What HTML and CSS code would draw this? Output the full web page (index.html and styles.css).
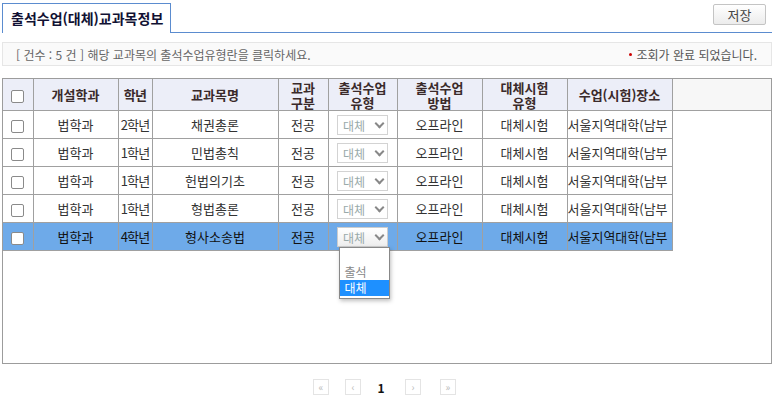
FILE: index.html
```html
<!DOCTYPE html>
<html lang="ko">
<head>
    <meta charset="UTF-8">
    <title>출석수업(대체)교과목정보</title>
    <link rel="stylesheet" href="styles.css">
</head>
<body>
    <div class="page">
        <div class="tab-bar">
            <div class="tab">출석수업(대체)교과목정보</div>
            <div class="tab-line">
                <button class="save-btn">저장</button>
            </div>
        </div>

        <div class="info-bar">
            <span>[ 건수 : 5 건 ] 해당 교과목의 출석수업유형란을 클릭하세요.</span>
            <span class="status"><i class="dot"></i>조회가 완료 되었습니다.</span>
        </div>

        <div class="grid">
            <table>
                <colgroup>
                    <col style="width:30px">
                    <col style="width:85px">
                    <col style="width:34px">
                    <col style="width:126px">
                    <col style="width:50px">
                    <col style="width:69px">
                    <col style="width:85px">
                    <col style="width:85px">
                    <col style="width:105px">
                    <col>
                </colgroup>
                <thead>
                    <tr>
                        <th><span class="chk"></span></th>
                        <th>개설학과</th>
                        <th class="tight">학년</th>
                        <th>교과목명</th>
                        <th><div>교과</div><div>구분</div></th>
                        <th><div>출석수업</div><div>유형</div></th>
                        <th><div>출석수업</div><div>방법</div></th>
                        <th><div>대체시험</div><div>유형</div></th>
                        <th>수업(시험)장소</th>
                        <th class="filler"></th>
                    </tr>
                </thead>
                <tbody>
                    <tr>
                        <td><span class="chk"></span></td>
                        <td>법학과</td>
                        <td class="tight">2학년</td>
                        <td>채권총론</td>
                        <td>전공</td>
                        <td><span class="sel">대체<i class="arrow"></i></span></td>
                        <td>오프라인</td>
                        <td>대체시험</td>
                        <td class="place">서울지역대학(남부</td>
                        <td class="filler"></td>
                    </tr>
                    <tr>
                        <td><span class="chk"></span></td>
                        <td>법학과</td>
                        <td class="tight">1학년</td>
                        <td>민법총칙</td>
                        <td>전공</td>
                        <td><span class="sel">대체<i class="arrow"></i></span></td>
                        <td>오프라인</td>
                        <td>대체시험</td>
                        <td class="place">서울지역대학(남부</td>
                        <td class="filler"></td>
                    </tr>
                    <tr>
                        <td><span class="chk"></span></td>
                        <td>법학과</td>
                        <td class="tight">1학년</td>
                        <td>헌법의기초</td>
                        <td>전공</td>
                        <td><span class="sel">대체<i class="arrow"></i></span></td>
                        <td>오프라인</td>
                        <td>대체시험</td>
                        <td class="place">서울지역대학(남부</td>
                        <td class="filler"></td>
                    </tr>
                    <tr>
                        <td><span class="chk"></span></td>
                        <td>법학과</td>
                        <td class="tight">1학년</td>
                        <td>형법총론</td>
                        <td>전공</td>
                        <td><span class="sel">대체<i class="arrow"></i></span></td>
                        <td>오프라인</td>
                        <td>대체시험</td>
                        <td class="place">서울지역대학(남부</td>
                        <td class="filler"></td>
                    </tr>
                    <tr class="selected">
                        <td><span class="chk"></span></td>
                        <td>법학과</td>
                        <td class="tight">4학년</td>
                        <td>형사소송법</td>
                        <td>전공</td>
                        <td class="open">
                            <span class="sel active">대체<i class="arrow"></i></span>
                            <div class="popup">
                                <div class="opt empty"></div>
                                <div class="opt">출석</div>
                                <div class="opt on">대체</div>
                            </div>
                        </td>
                        <td>오프라인</td>
                        <td>대체시험</td>
                        <td class="place">서울지역대학(남부</td>
                        <td class="filler"></td>
                    </tr>
                </tbody>
            </table>
        </div>

        <div class="paging">
            <span class="pg first">&laquo;</span>
            <span class="pg prev">&lsaquo;</span>
            <span class="cur">1</span>
            <span class="pg next">&rsaquo;</span>
            <span class="pg last">&raquo;</span>
        </div>
    </div>
</body>
</html>
```

FILE: styles.css
```css
body {
    margin: 0;
    font-family: "Noto Sans CJK KR", "Liberation Sans", sans-serif;
    font-size: 13px;
    color: #333;
    background: #fff;
}
.page {
    padding: 3px 3px 0 2px;
}
.tab-bar {
    display: flex;
    height: 30px;
}
.tab {
    padding: 0 7px 0 8px;
    line-height: 28px;
    border: 1px solid #5b8ccf;
    border-bottom: none;
    font-weight: bold;
    font-size: 14px;
    color: #111133;
}
.tab-line {
    flex: 1;
    border-bottom: 1px solid #5b8ccf;
    display: flex;
    justify-content: flex-end;
    align-items: flex-start;
    padding-top: 1px;
    padding-right: 6px;
}
.save-btn {
    width: 53px;
    height: 21px;
    font-family: inherit;
    font-size: 13px;
    color: #444;
    background: linear-gradient(#fff, #ececec);
    border: 1px solid #c4c4c4;
    border-radius: 2px;
    padding: 0;
}
.info-bar {
    margin-top: 9px;
    height: 22px;
    border: 1px solid #e6e6e6;
    background: #fafafa;
    display: flex;
    justify-content: space-between;
    align-items: center;
    padding: 0 14px 0 13px;
    color: #666;
    font-size: 12px;
}
.status {
    display: flex;
    align-items: center;
    color: #555;
}
.dot {
    width: 3px;
    height: 3px;
    background: #c00;
    border-radius: 50%;
    margin-right: 5px;
}
.grid {
    margin-top: 12px;
    height: 284px;
    border: 1px solid #9c9c9c;
    position: relative;
}
table {
    border-collapse: collapse;
    table-layout: fixed;
    width: 100%;
}
th, td {
    border: 1px solid #a0a0a0;
    text-align: center;
    padding: 0;
    white-space: nowrap;
    overflow: hidden;
}
th:first-child, td:first-child {
    border-left: none;
}
thead tr th {
    border-top: none;
}
th {
    height: 31px;
    background: #eceef8;
    font-weight: bold;
    color: #3a2a2a;
}
th div {
    height: 15px;
    line-height: 15px;
}
th.filler {
    background: #f7f7f7;
    border-right: none;
}
td {
    height: 27px;
    color: #333;
}
td.filler {
    border: none;
}
.tight {
    letter-spacing: -0.8px;
}
td.place {
    text-align: left;
}
.chk {
    display: inline-block;
    width: 11px;
    height: 11px;
    border: 1px solid #8a8a8a;
    border-radius: 2px;
    background: #fff;
    vertical-align: middle;
}
.sel {
    display: inline-flex;
    align-items: center;
    justify-content: space-between;
    width: 40px;
    height: 18px;
    padding: 0 4px 0 5px;
    border: 1px solid #d3d3d3;
    background: #fff;
    color: #9aa;
    font-size: 12px;
    vertical-align: middle;
}
.sel.active {
    background: linear-gradient(#fff, #eee);
    border-color: #ccc;
}
.arrow {
    width: 5px;
    height: 5px;
    border-right: 2px solid #888;
    border-bottom: 2px solid #888;
    transform: rotate(45deg);
    margin-top: -4px;
}
tr.selected td {
    background: #6eaae9;
    color: #111;
}
tr.selected td.filler {
    background: none;
}
td.open {
    overflow: visible;
    position: relative;
}
.popup {
    position: absolute;
    left: 10px;
    top: 24px;
    width: 49px;
    border: 1px solid #888;
    background: #fff;
    box-shadow: 1px 2px 4px rgba(0, 0, 0, 0.25);
    z-index: 2;
    text-align: left;
    font-size: 12px;
}
.opt {
    height: 16px;
    line-height: 16px;
    padding-left: 5px;
    color: #888;
}
.opt.on {
    background: #1e90ff;
    color: #fff;
    margin-bottom: 2px;
}
.paging {
    display: flex;
    align-items: center;
    height: 36px;
    margin-top: 5px;
    padding-left: 311px;
}
.pg {
    width: 14px;
    height: 14px;
    border: 1px solid #e4e4e4;
    color: #bbb;
    font-size: 10px;
    line-height: 13px;
    text-align: center;
}
.first {
    margin-right: 16px;
}
.prev {
    margin-right: 16px;
}
.cur {
    width: 8px;
    margin-right: 20px;
    text-align: center;
    font-weight: bold;
    font-size: 12px;
    color: #111;
}
.next {
    margin-right: 19px;
}
```
